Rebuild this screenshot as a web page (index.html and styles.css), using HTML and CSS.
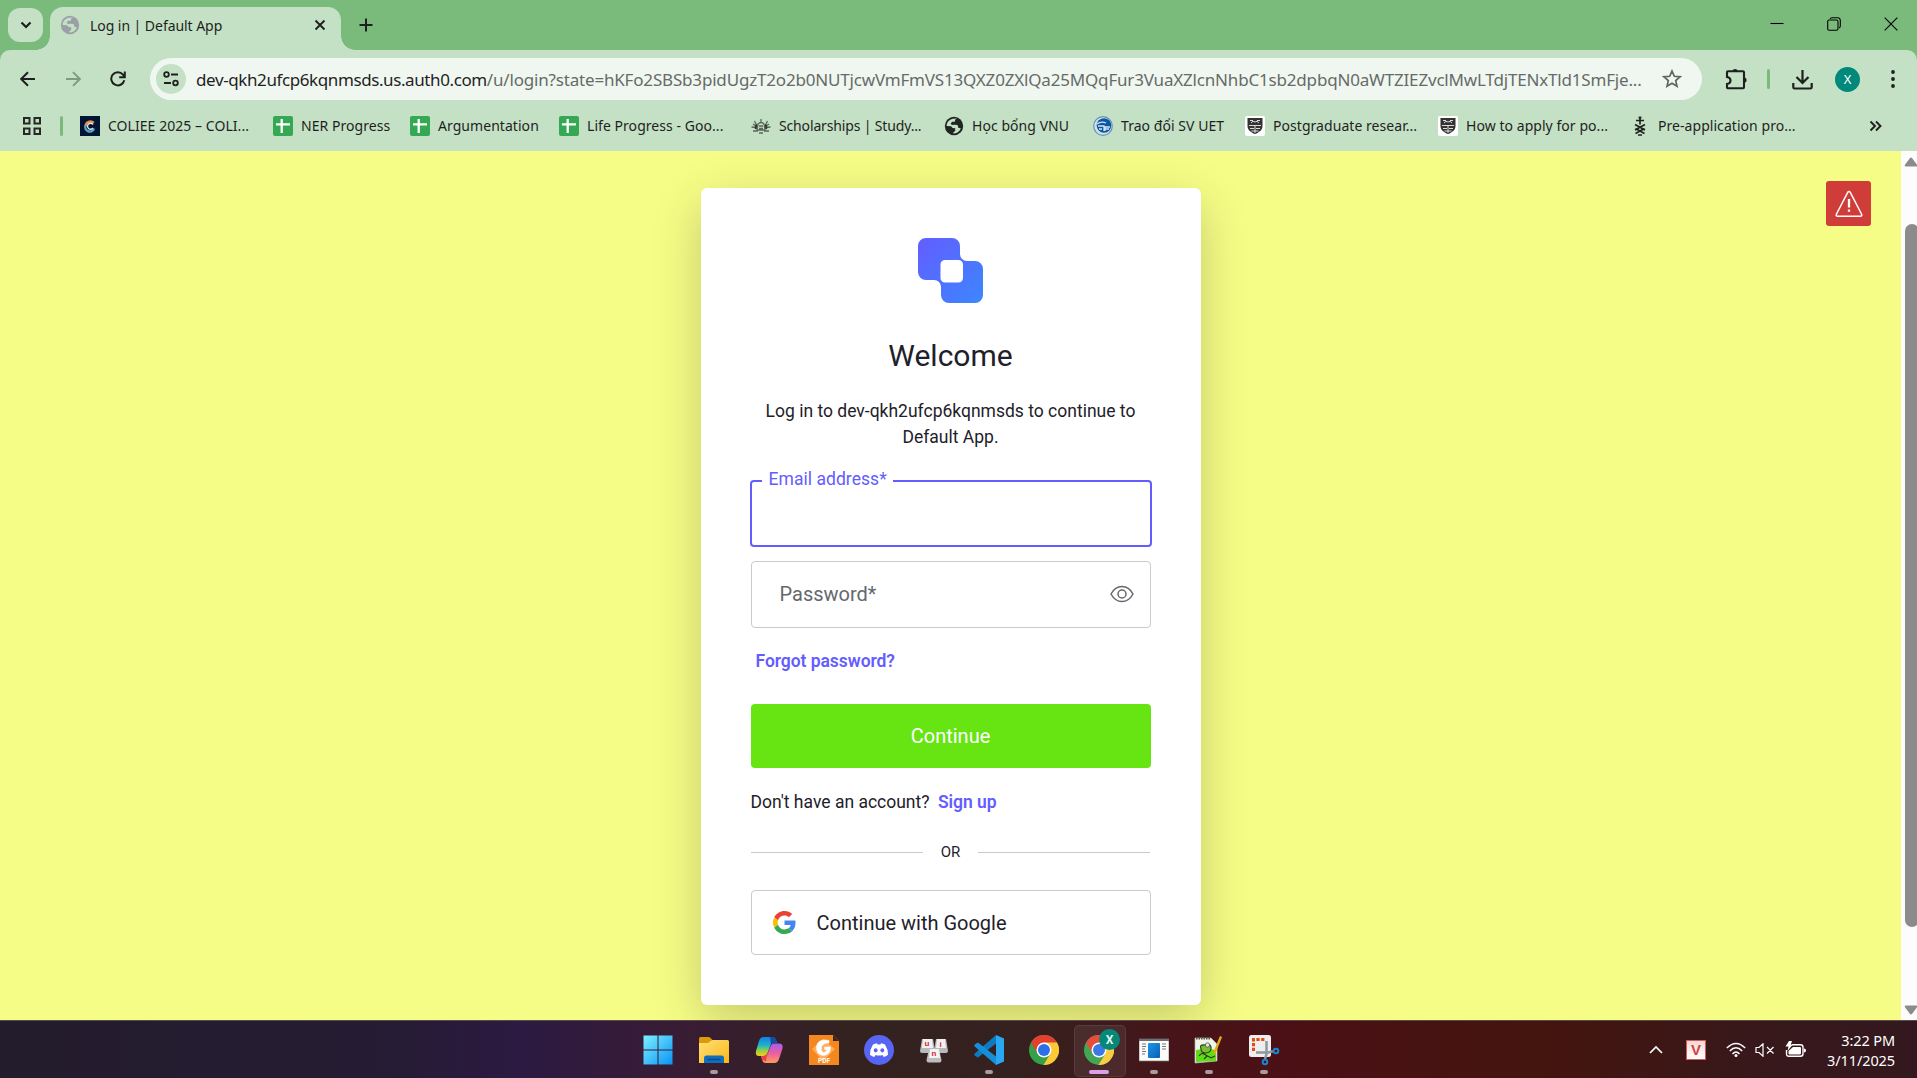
FILE: index.html
```html
<!DOCTYPE html>
<html lang="en">
<head>
<meta charset="utf-8">
<title>Log in | Default App</title>
<link rel="stylesheet" href="styles.css">
</head>
<body>
<svg class="defs" width="0" height="0" aria-hidden="true">
  <defs>
    <linearGradient id="logoGrad" x1="0" y1="0" x2="1" y2="1"><stop offset="0" stop-color="#635dff"/><stop offset="1" stop-color="#3c86ff"/></linearGradient>
    <linearGradient id="winGrad" x1="0" y1="0" x2="1" y2="1"><stop offset="0" stop-color="#7df0ff"/><stop offset="1" stop-color="#0a93f5"/></linearGradient>
    <linearGradient id="folderGrad" x1="0" y1="0" x2="1" y2="1"><stop offset="0" stop-color="#ffe07a"/><stop offset="1" stop-color="#fbb814"/></linearGradient>
    <linearGradient id="copA" x1="0" y1="0" x2="0" y2="1"><stop offset="0" stop-color="#0f7fe8"/><stop offset=".45" stop-color="#20b4c8"/><stop offset=".7" stop-color="#8fd04a"/><stop offset="1" stop-color="#fbc81b"/></linearGradient>
    <linearGradient id="copB" x1="0" y1="0" x2="0" y2="1"><stop offset="0" stop-color="#a85cf0"/><stop offset=".5" stop-color="#ea5f9f"/><stop offset="1" stop-color="#ff9a5c"/></linearGradient>
    <linearGradient id="blueGrad" x1="0" y1="0" x2="1" y2="1"><stop offset="0" stop-color="#1e96e8"/><stop offset="1" stop-color="#0860b4"/></linearGradient>
    <symbol id="globe" viewBox="0 0 20 20">
      <circle cx="10" cy="10" r="9.2" fill="currentColor"/>
      <path class="globe-land" d="M8.6 2.8c-3.4.8-6 3.700-6 7.200l4.500.2 1.500 1.800 2.600.2V15l-1.800 1.200-.2 1.400c3.400 0 6.500-2 7.700-5l-2.600-.9-.7-2.600-3.300-.4-2.600.3-1-1.700 1.700-1.600h2.400l.5-2.300 1.800-1z"/>
    </symbol>
    <symbol id="sheet" viewBox="0 0 20 20"><rect width="20" height="20" rx="2" fill="#34a853"/><path d="M8.700 3v14M3 8.300h14" stroke="#fff" stroke-width="2.300"/></symbol>
    <symbol id="crest" viewBox="0 0 20 20"><rect width="20" height="20" rx="2" fill="#fff"/><path d="M2.500 2h15v8c0 4-3.500 6.500-7.500 8-4-1.500-7.500-4-7.500-8z" fill="#333"/><path d="M4 9.500h12M5 12.500h4m2 0h4M6.500 15h7M10 10v7M5 4.500h3m4 0h3M6 7q2-3 4-1 2-2 4 1" stroke="#ddd" stroke-width="1" fill="none"/></symbol>
    <symbol id="chromeLogo" viewBox="0 0 30 30">
      <circle cx="15" cy="15" r="15" fill="#34a048"/>
      <path d="M2 7.500A15 15 0 0 1 28 7.500L15 9 8.500 18.700z" fill="#e3402f"/>
      <path d="M28 7.500A15 15 0 0 1 14.500 30l7-11.500L15 7.500z" fill="#fcc934"/>
      <circle cx="15" cy="15" r="7.500" fill="#fff"/><circle cx="15" cy="15" r="6" fill="#2d6fe8"/>
    </symbol>
  </defs>
</svg>

<header class="browser">
  <div class="tabstrip">
    <button class="tab-search" aria-label="Search tabs"><svg width="12" height="8" viewBox="0 0 12 8"><path d="M1.500 1.500 6 6l4.500-4.500" fill="none" stroke="#1f1f1f" stroke-width="2.200"/></svg></button>
    <div class="tab">
      <svg class="tab-icon" width="20" height="20"><use href="#globe"/></svg>
      <span class="tab-title">Log in | Default App</span>
      <svg class="tab-close" width="12" height="12" viewBox="0 0 12 12"><path d="M1.500 1.500l9 9m0-9-9 9" stroke="#1f1f1f" stroke-width="1.900"/></svg>
    </div>
    <svg class="new-tab" width="14" height="14" viewBox="0 0 14 14"><path d="M7 .5v13M.5 7h13" stroke="#1f1f1f" stroke-width="2"/></svg>
    <div class="window-controls">
      <svg width="14" height="14" viewBox="0 0 14 14"><path d="M.5 6.500h13" stroke="#000" stroke-width="1.100"/></svg>
      <svg width="14" height="14" viewBox="0 0 14 14" fill="none" stroke="#000" stroke-width="1.100"><rect x=".7" y="3" width="10.300" height="10.300" rx="1.500"/><path d="M3 1.900Q3.500.7 5 .7h5.500q2.800 0 2.800 2.800V9q0 1.500-1.200 2"/></svg>
      <svg width="14" height="14" viewBox="0 0 14 14"><path d="M.7.700l12.600 12.600m0-12.600L.7 13.300" stroke="#000" stroke-width="1.100"/></svg>
    </div>
  </div>

  <div class="toolbar">
    <div class="nav">
      <svg width="16" height="16" viewBox="0 0 16 16"><path d="M15 8H1.500M8 1.200 1.200 8 8 14.800" fill="none" stroke="#1f1f1f" stroke-width="2"/></svg>
      <svg width="16" height="16" viewBox="0 0 16 16"><path d="M1 8h13.500M8 1.200 14.800 8 8 14.800" fill="none" stroke="#7e9a80" stroke-width="1.900"/></svg>
      <svg width="16" height="16" viewBox="0 0 16 16"><path d="M14.300 9.300A6.600 6.600 0 1 1 13 3.600l1.500 2M14.800.5v5.700H9.200" fill="none" stroke="#1f1f1f" stroke-width="2"/></svg>
    </div>
    <div class="omnibox">
      <span class="site-info"><svg width="16" height="16" viewBox="0 0 16 16" fill="none" stroke="#1f1f1f" stroke-width="1.800"><circle cx="3.500" cy="3.500" r="2.300"/><path d="M8 3.500h7M1 12h7"/><circle cx="12.500" cy="12" r="2.300"/></svg></span>
      <span class="url"><b>dev-qkh2ufcp6kqnmsds.us.auth0.com</b>/u/login?state=hKFo2SBSb3pidUgzT2o2b0NUTjcwVmFmVS13QXZ0ZXlQa25MQqFur3VuaXZlcnNhbC1sb2dpbqN0aWTZIEZvclMwLTdjTENxTld1SmFje...</span>
      <svg class="star" width="20" height="20" viewBox="0 0 20 20"><path d="M10 2l2.300 5.300 5.700.5-4.300 3.800 1.300 5.700-5-3-5 3 1.300-5.700L2 7.800l5.700-.5z" fill="none" stroke="#5f6661" stroke-width="1.700"/></svg>
    </div>
    <div class="actions">
      <svg class="ext" width="22" height="22" viewBox="0 0 22 22"><path d="M2 4.300q0-1 1-1h15q1 0 1 1v15q0 1-1 1H3q-1 0-1-1V16c3-.5 3.500-2 3.500-3.500S5 9.500 2 9z" fill="none" stroke="#1f1f1f" stroke-width="2.100"/><path d="M7.500 3.500a2.600 2.600 0 0 1 5.200 0zM19 9.500a2.600 2.600 0 0 1 0 5.200z" fill="#1f1f1f"/></svg>
      <i class="divider"></i>
      <svg class="dl" width="21" height="21" viewBox="0 0 21 21"><path d="M10.500 1v13M4.500 8l6 6 6-6M1.300 14v4.200q0 1.300 1.300 1.300h15.800q1.300 0 1.300-1.300V14" fill="none" stroke="#1f1f1f" stroke-width="2.200"/></svg>
      <span class="avatar">X</span>
      <svg class="menu" width="4" height="18" viewBox="0 0 4 18" fill="#1f1f1f"><circle cx="2" cy="2" r="1.900"/><circle cx="2" cy="9" r="1.900"/><circle cx="2" cy="16" r="1.900"/></svg>
    </div>
  </div>

  <nav class="bookmarks">
    <svg class="apps" width="18" height="18" viewBox="0 0 18 18" fill="none" stroke="#252925" stroke-width="2"><path d="M1 1h5.500v5.500H1zM11.500 1H17v5.500h-5.500zM1 11.500h5.500V17H1zM11.500 11.500H17V17h-5.500z"/></svg>
    <i class="divider"></i>
    <a class="bm w193"><svg width="20" height="20" viewBox="0 0 20 20"><rect width="20" height="20" fill="#021433"/><path d="M13.800 6.800A5 5 0 0 0 5.500 10" fill="none" stroke="#e8905a" stroke-width="2.400"/><path d="M5.500 9.500a4.500 4.500 0 0 0 8.500 3" fill="none" stroke="#4ba6c4" stroke-width="2.400"/><path d="M13 8.500a3 3 0 1 0 0 3.500" fill="none" stroke="#f5e6d2" stroke-width="1.300"/></svg><span>COLIEE 2025 – COLI...</span></a>
    <a class="bm w137"><svg width="20" height="20"><use href="#sheet"/></svg><span>NER Progress</span></a>
    <a class="bm w149"><svg width="20" height="20"><use href="#sheet"/></svg><span>Argumentation</span></a>
    <a class="bm w192"><svg width="20" height="20"><use href="#sheet"/></svg><span>Life Progress - Goo...</span></a>
    <a class="bm w193 tight"><svg width="20" height="20" viewBox="0 0 20 20" fill="none" stroke="#5a665b" stroke-width="1.300"><path d="M10 3v3M7 8q3-3 6 0l1 6H6zM3.500 5l2 4M16.500 5l-2 4M.5 11l5 .5M19.500 11l-5 .5M2 15h5M18 15h-5M8 17h4M8 10h4M8 12.500h4M2 8l3 2M18 8l-3 2"/><path d="M6 9q-2 1-1 4M14 9q2 1 1 4" stroke="#2f3a30" stroke-width="2"/></svg><span>Scholarships | Study...</span></a>
    <a class="bm w149"><svg class="dark-globe" width="20" height="20"><use href="#globe"/></svg><span>Học bổng VNU</span></a>
    <a class="bm w152"><svg width="20" height="20" viewBox="0 0 20 20"><circle cx="10" cy="10" r="9.300" fill="#cfe3e6" stroke="#6594b5" stroke-width="1.200"/><circle cx="11" cy="9.500" r="7.300" fill="#0b57a4"/><path d="M4 8q4-3 9-1M5 10h6v5M12 15v-4h5M12 13h4M6 13h3" fill="none" stroke="#d5e5ef" stroke-width="1.300"/></svg><span>Trao đổi SV UET</span></a>
    <a class="bm w193"><svg width="20" height="20"><use href="#crest"/></svg><span>Postgraduate resear...</span></a>
    <a class="bm w192"><svg width="20" height="20"><use href="#crest"/></svg><span>How to apply for po...</span></a>
    <a class="bm"><svg class="thistle" width="20" height="20" viewBox="0 0 20 20" fill="none" stroke="#1f211f" stroke-width="1.700"><path d="M10 .5v8M6 4.500h8M5 8.500l10 5.500M15 8.500 5 14M5.500 12.500l9 5M14.500 12.500l-9 5M8 19h4M8.500 1.500h3"/></svg><span>Pre-application pro...</span></a>
    <svg class="more" width="13" height="12" viewBox="0 0 13 12"><path d="M1.500 1.500 6 6l-4.500 4.500M7 1.500 11.500 6 7 10.500" fill="none" stroke="#1f1f1f" stroke-width="1.900"/></svg>
  </nav>
</header>

<main class="page">
  <section class="viewport">
    <div class="card">
      <svg class="logo" width="65" height="65" viewBox="0 0 65 65"><path fill="url(#logoGrad)" fill-rule="evenodd" d="M8 0H34a8 8 0 0 1 8 8v8a7 7 0 0 0 7 7h8a8 8 0 0 1 8 8v26a8 8 0 0 1-8 8H31a8 8 0 0 1-8-8v-8a7 7 0 0 0-7-7H8a8 8 0 0 1-8-8V8a8 8 0 0 1 8-8zM27 22a4.500 4.500 0 0 0-4.500 4.500v13.500A4.500 4.500 0 0 0 27 44.500h13.500A4.500 4.500 0 0 0 45 40V26.500A4.500 4.500 0 0 0 40.500 22z"/></svg>
      <h1>Welcome</h1>
      <p class="intro">Log in to dev-qkh2ufcp6kqnmsds to continue to Default App.</p>
      <div class="field focused"><label>Email address*</label></div>
      <div class="field"><span class="placeholder">Password*</span>
        <svg width="24" height="18" viewBox="0 0 24 18" fill="none" stroke="#65676e" stroke-width="1.500"><path d="M1 9C3.800 3.800 7.400 1.500 12 1.500S20.200 3.800 23 9c-2.800 5.200-6.400 7.500-11 7.500S3.800 14.200 1 9z"/><circle cx="12" cy="9" r="4"/></svg>
      </div>
      <a class="link forgot">Forgot password?</a>
      <button class="primary">Continue</button>
      <p class="signup">Don't have an account? <a class="link">Sign up</a></p>
      <div class="or"><i></i><span>OR</span><i></i></div>
      <button class="google">
        <svg width="23" height="23" viewBox="0 0 48 48"><path fill="#ea4335" d="M24 9.500c3.540 0 6.710 1.220 9.210 3.600l6.850-6.850C35.900 2.380 30.470 0 24 0 14.620 0 6.510 5.380 2.560 13.220l7.980 6.190C12.430 13.720 17.740 9.500 24 9.500z"/><path fill="#4285f4" d="M46.980 24.550c0-1.570-.15-3.090-.38-4.550H24v9.020h12.940c-.58 2.960-2.260 5.480-4.780 7.180l7.730 6c4.510-4.180 7.090-10.360 7.090-17.650z"/><path fill="#fbbc05" d="M10.530 28.590A14.500 14.500 0 0 1 9.770 24c0-1.600.27-3.140.76-4.590l-7.980-6.190A23.900 23.900 0 0 0 0 24c0 3.880.92 7.540 2.560 10.780z"/><path fill="#34a853" d="M24 48c6.480 0 11.930-2.130 15.890-5.810l-7.730-6c-2.150 1.450-4.920 2.300-8.160 2.300-6.260 0-11.570-4.220-13.470-9.910l-7.980 6.190C6.510 42.620 14.620 48 24 48z"/></svg>
        <span>Continue with Google</span>
      </button>
    </div>
    <div class="alert"><svg width="28" height="28" viewBox="0 0 28 28" fill="none" stroke="#fff" stroke-width="1.500"><path d="M14 1.500q.8 0 1.300.9l11.300 21.800q.8 2-1.300 2H2.700q-2.100 0-1.300-2L12.700 2.400q.5-.9 1.300-.9z"/><path d="M14 9v8.500M14 19.500v2.300" stroke-width="2.300"/></svg></div>
  </section>
  <aside class="scrollbar">
    <svg width="14" height="10" viewBox="0 0 14 10"><path d="M7 .5q.7 0 1.200.7l5 6.800q.3 1.500-1.200 1.500H2Q.5 9.500.8 8l5-6.800Q6.300.5 7 .5z" fill="#8b8b8b"/></svg>
    <i class="thumb"></i>
    <svg width="14" height="10" viewBox="0 0 14 10"><path d="M7 9.500q.7 0 1.200-.7l5-6.800q.3-1.500-1.200-1.500H2Q.5.500.8 2l5 6.800q.5.700 1.200.7z" fill="#8b8b8b"/></svg>
  </aside>
</main>

<footer class="taskbar">
  <div class="dock">
    <span class="app"><svg width="30" height="30" viewBox="0 0 30 30"><path d="M.5.500H14.500V14.500H.5zM15.500.500h14v14h-14zM.5 15.500h14v14H.5zM15.500 15.500h14v14h-14z" fill="url(#winGrad)"/></svg></span>
    <span class="app running"><svg width="30" height="30" viewBox="0 0 30 30"><path d="M0 9V3.500q0-1.500 1.500-1.500h8q1 0 2 1l3 3V10z" fill="#dd9a07"/><path d="M0 8h8q1.500 0 3-1.500T14 5h14.500Q30 5 30 6.500V28H0z" fill="url(#folderGrad)"/><path d="M5 28v-5q0-2.500 2.500-2.500h15Q25 20.500 25 23v5z" fill="#0f6fbd"/><path d="M9 24.500h12" stroke="#0a4a88" stroke-width="1.300" stroke-linecap="round"/></svg></span>
    <span class="app"><svg width="30" height="30" viewBox="0 0 30 30"><path d="M9.500 2h9q2.500 0 3.500 3l1 3h-3q-3 0-4 3.500L13.500 18q-1.200 3-4 3H5q-4 0-3-5L5 6q1.300-4 4.500-4z" fill="url(#copA)"/><path d="M16 2h2.500q2.500 0 3.500 3l1 3h-3q-2 0-3 2z" fill="#1749a8"/><path d="M20.500 28h-9Q9 28 8 24.500L7 21h3q3 0 4-3.500l2.500-6Q17.700 8.500 20.500 8.500H25q4.500 0 3.500 5L25 24q-1.300 4-4.500 4z" fill="url(#copB)"/><path d="M8 24.500 7 21h3q2 0 3-2l-1 7.500z" fill="#e8443a"/></svg></span>
    <span class="app"><svg width="30" height="30" viewBox="0 0 30 30"><path d="M0 0h24l6 6v24H0z" fill="#f5871f"/><path d="M24 0v6h6z" fill="#3a2420"/><path d="M14 4 26 14 14 26 3 14z" fill="#ffad60"/><path d="M20 5.500q-11-2.500-12.500 6Q7 20 14.500 20.500q7-.5 7-8.500h-6v2.500h2.500q-1 3-3.500 3-3-1-2-6 2-4 7.500-3.500z" fill="#fff" stroke="#fff" stroke-width=".6"/><text class="pdf" x="15" y="27.500" text-anchor="middle">PDF</text></svg></span>
    <span class="app"><svg width="30" height="30" viewBox="0 0 30 30"><circle cx="15" cy="15" r="15" fill="#5865f2"/><path d="M9 9.500q2-1.100 4-1.300l.6 1.200h2.800l.6-1.200q2 .2 4 1.300 3.200 5 3 10.300-2.200 1.700-4.300 2.200l-1.200-2q-3.500 1-7 0l-1.200 2Q8.200 21.500 6 19.800 5.800 14.500 9 9.500z" fill="#fff"/><ellipse cx="11.700" cy="15.300" rx="1.900" ry="2.100" fill="#5865f2"/><ellipse cx="18.300" cy="15.300" rx="1.900" ry="2.100" fill="#5865f2"/></svg></span>
    <span class="app"><svg width="30" height="30" viewBox="0 0 30 30"><path d="M3 4h11l2 12q0 2-2 2H3q-2 0-2-2zM17 4h10l2 12q0 2-2 2H17q-2 0-2-2z" fill="#b9b9bb"/><path d="M4 4h9l1 9H3zM18 4h8l1 9H17z" fill="#f0eff1"/><path d="M10 14h10l2.500 11q0 2.500-2 2.500H9.500q-2 0-2-2.500z" fill="#bdbdc0"/><path d="M11 14h9l1 9H10z" fill="#f3f2f4"/><g class="keys"><text x="5.500" y="11">u</text><text x="20.500" y="11.500">i</text><text x="12.500" y="21">n</text></g></svg></span>
    <span class="app running"><svg width="30" height="30" viewBox="0 0 30 30"><path d="M22 0 30 3.500v23L22 30z" fill="#2aa7f2"/><path d="M22 0v8.500L4 22.500 1 20.800q-1.300-1.300 0-2.500z" fill="#0d7ac4"/><path d="M22 30v-8.500L4 7.500 1 9.200Q-.3 10.500 1 11.700z" fill="#168fdb"/></svg></span>
    <span class="app"><svg width="30" height="30"><use href="#chromeLogo"/></svg></span>
    <span class="app running active"><svg width="30" height="30"><use href="#chromeLogo"/></svg><b class="badge">X</b></span>
    <span class="app running"><svg width="30" height="30" viewBox="0 0 30 30"><path d="M0 4h30v22H0z" fill="#fbfbfb" stroke="#777" stroke-width=".7"/><path d="M0 4h30v2H0z" fill="#6d7072"/><rect x="9" y="8" width="12" height="15" rx="1" fill="url(#blueGrad)"/><path d="M3 9h4M3 11.500h4M3 14h3M3 16.500h4M3 19h3M23 9h4M23 11.500h4M23 14h4" stroke="#777" stroke-width="1.100"/></svg></span>
    <span class="app running"><svg width="30" height="30" viewBox="0 0 30 30"><path d="M1 3h16l6 6v17L1 28z" fill="#eef5e6" stroke="#aab5a3" stroke-width=".7"/><path d="M2 15q10-2 20 0v11L2 27z" fill="#5fdc18"/><path d="M2 3.500h15" stroke="#555" stroke-dasharray="1.500 1" stroke-width="2"/><path d="M7 14q-2-5 4-4 5-2 6 2 1 5-5 6-5 0-5-4zM5 21q3-4 5-2l7 4 4-2M10 24l3-3" fill="#79bd32" stroke="#263d17" stroke-width="1.100"/><circle cx="13.500" cy="10" r="2.200" fill="#dfe6da" stroke="#445" stroke-width=".7"/><path d="M20 19 27 1.500" stroke="#e7a91a" stroke-width="2.300"/></svg></span>
    <span class="app running"><svg width="30" height="30" viewBox="0 0 30 30" overflow="visible"><rect width="22" height="22" rx="2.500" fill="#eee"/><path d="M4.500 16V4.500H16" fill="none" stroke="#e04a14" stroke-width="3" stroke-dasharray="3.200 1.600"/><path d="M17.500 6v13l-1.500 5M7 17.500h12l5-1.300" fill="none" stroke="#90979d" stroke-width="2.500"/><circle cx="27" cy="16" r="2.300" fill="none" stroke="#1686d0" stroke-width="2"/><circle cx="16" cy="27" r="2.300" fill="none" stroke="#1686d0" stroke-width="2"/></svg></span>
  </div>
  <div class="tray">
    <svg width="14" height="9" viewBox="0 0 14 9"><path d="M1 8l6-6 6 6" fill="none" stroke="#fff" stroke-width="1.700"/></svg>
    <span class="vkey">V</span>
    <svg class="wifi" width="20" height="16" viewBox="0 0 20 16" fill="none" stroke="#fff" stroke-width="1.500"><path d="M.8 6Q10-3 19.200 6M3.800 9Q10 2.500 16.200 9M6.500 12Q10 8 13.500 12"/><circle cx="10" cy="13.500" r="1.500" fill="#fff" stroke="none"/></svg>
    <svg class="mute" width="20" height="14" viewBox="0 0 20 14" fill="none" stroke="#fff" stroke-width="1.200"><path d="M1 4.500h3l4-3.700v12.400L4 9.500H1zM12 4l6.500 6.500m0-6.500L12 10.500"/></svg>
    <svg class="battery" width="21" height="17" viewBox="0 0 21 17"><path d="M7 3.700h8.500q2.500 0 2.500 2.500v6.600q0 2.500-2.500 2.500H4q-2.500 0-2.500-2.500V9" fill="none" stroke="#fff" stroke-width="1.400"/><path d="M8 6h7q1 0 1 1v5.500q0 1-1 1H4.500q-1 0-1-1V10zM19 7.500q2 0 2 2t-2 2zM4 0h3L5.800 3.500h2L2.500 10l1-4.500H.5z" fill="#fff"/></svg>
    <div class="clock"><span>3:22 PM</span><span>3/11/2025</span></div>
  </div>
</footer>
</body>
</html>
```
FILE: styles.css
```css
* { box-sizing: border-box; }
body {
  margin: 0;
  width: 1917px;
  height: 1078px;
  overflow: hidden;
  display: flex;
  flex-direction: column;
  font-family: Roboto, "Liberation Sans", sans-serif;
  color: #1e212a;
}
.defs { position: absolute; }
svg { display: block; flex: none; }
button { font: inherit; border: 0; padding: 0; }

/* browser chrome */
.browser {
  flex: none;
  height: 151px;
  background: #7abb7b;
  font-family: "Noto Sans", "Open Sans", sans-serif;
  color: #1f1f1f;
}
.tabstrip { height: 50px; display: flex; align-items: flex-start; padding-left: 8px; }
.tab-search {
  width: 35px; height: 34px; margin-top: 8px;
  border-radius: 12px; background: #c4e1c5;
  display: grid; place-items: center;
}
.tab {
  position: relative;
  width: 291px; height: 43px; margin: 7px 0 0 7px; padding: 0 15px 7px 10px;
  display: flex; align-items: center;
  background: #c4e1c5; border-radius: 13px 13px 0 0;
}
.tab::before, .tab::after {
  content: ""; position: absolute; bottom: 0; width: 14px; height: 14px;
}
.tab::before { right: 100%; background: radial-gradient(circle at 0 0, transparent 13.500px, #c4e1c5 14px); }
.tab::after { left: 100%; background: radial-gradient(circle at 100% 0, transparent 13.500px, #c4e1c5 14px); }
.tab-icon { color: #9aa0a6; }
.globe-land { fill: #c4e1c5; }
.dark-globe { color: #202422; }
.tab-title { margin-left: 10px; font-size: 14px; letter-spacing: -.05px; }
.tab-close { margin-left: auto; }
.new-tab { margin: 18px 0 0 18px; }
.window-controls { margin: 17px 0 0 auto; padding-right: 19px; display: flex; gap: 43px; }

.toolbar {
  height: 58px; display: flex; align-items: center;
  background: #c4e1c5; border-radius: 10px 10px 0 0;
}
.nav { display: flex; gap: 29px; margin-left: 20px; width: 130px; }
.omnibox {
  width: 1552px; height: 42px; border-radius: 21px; padding: 0 20px 0 6px;
  background: #f0f7f1; display: flex; align-items: center;
}
.site-info { width: 30px; height: 30px; border-radius: 50%; background: #c4e1c5; display: grid; place-items: center; }
.url { margin-left: 10px; font-size: 17px; color: #666b67; white-space: nowrap; letter-spacing: -.18px; }
.url b { font-weight: 400; color: #1f1f1f; letter-spacing: -.4px; }
.star { margin-left: auto; }
.actions { flex: 1; display: flex; align-items: center; }
.ext { margin-left: 23px; }
.divider { width: 3px; height: 20px; border-radius: 2px; background: #7abb7b; }
.actions .divider { margin-left: 20px; }
.dl { margin-left: 22px; }
.avatar {
  width: 25px; height: 25px; margin-left: 22px; border-radius: 50%;
  background: #00897b; color: #fff; font-size: 13px; display: grid; place-items: center;
}
.menu { margin-left: 31px; }

.bookmarks { height: 43px; padding: 0 35px 7px 23px; display: flex; align-items: center; background: #c4e1c5; }
.bookmarks .divider { margin: 0 17px 0 19px; }
.bm { display: flex; align-items: center; gap: 8px; font-size: 14px; letter-spacing: .05px; white-space: nowrap; }
.bm span { padding-bottom: 2px; }
.tight { letter-spacing: -.15px; }
.w137 { width: 137px; }
.w149 { width: 149px; }
.w152 { width: 152px; }
.w192 { width: 192px; }
.w193 { width: 193px; }
.more { margin-left: auto; }

/* login page */
.page { flex: 1; display: flex; min-height: 0; }
.viewport {
  position: relative; width: 1901px; overflow: hidden; background: #f6fd86;
  display: flex; justify-content: center; align-items: flex-start; padding-top: 37px;
}
.card {
  width: 500px; height: 817px; padding: 50px; border-radius: 6px; background: #fff;
  box-shadow: 0 15px 50px rgba(0, 0, 0, .2);
  display: flex; flex-direction: column; font-size: 17.500px;
}
.logo { align-self: center; }
h1 { margin: 32px 0 0; font-size: 30px; line-height: 42px; font-weight: 400; text-align: center; }
.intro { margin: 21px 0 0; line-height: 26px; text-align: center; }
.field {
  position: relative; height: 67px; margin-top: 14px; padding: 0 16px 0 28px;
  border: 1px solid #c9cace; border-radius: 4px;
  display: flex; align-items: center; justify-content: space-between;
}
.field.focused { margin: 30px -1px 0; border: 2px solid #635dff; height: 67px; }
.field label {
  position: absolute; left: 10px; top: -15px; padding: 0 6px 0 7px; letter-spacing: .05px;
  background: #fff; color: #635dff; font-size: 17.500px; line-height: 24px;
}
.placeholder { font-size: 20px; color: #65676e; }
.link { color: #635dff; font-weight: 600; letter-spacing: -.05px; }
.forgot { margin: 20px 0 0 5px; line-height: 26px; }
.primary { height: 65px; margin-top: 30px; border-radius: 4px; background: #67e512; color: #fff; font-size: 20px; }
.signup { margin: 21px 0 0; line-height: 26px; }
.signup .link { margin-left: 4px; }
.or { display: flex; align-items: center; justify-content: space-between; height: 26px; margin-top: 24px; font-size: 15px; }
.or i { width: 172px; height: 1px; background: #c9cace; }
.google {
  height: 65px; margin-top: 25px; padding-left: 21px; border: 1px solid #c9cace; border-radius: 4px;
  background: #fff; color: #1e212a; font-size: 20px; display: flex; align-items: center; gap: 21px;
}
.alert {
  position: absolute; right: 30px; top: 30px; width: 45px; height: 45px; border-radius: 3px;
  background: #d03c38; display: grid; place-items: center;
}
.scrollbar {
  width: 16px; padding: 6px 0 5px 3px; overflow: hidden; background: #fcfcfc;
  display: flex; flex-direction: column;
}
.thumb { width: 14px; height: 703px; margin: 57px 0 auto 1px; border-radius: 7px; background: #8b8b8b; }

/* taskbar */
.taskbar {
  flex: none; height: 58px; border-top: 1px solid #5a4a4a;
  background: linear-gradient(90deg, #231c2c 0, #251c33 380px, #2c1a42 520px, #381c34 680px, #33221f 850px, #35211f 1020px, #471419 1180px, #4b1015 1290px, #44150f 1550px, #38181a 1750px, #33181f 1917px);
  display: flex; align-items: center; justify-content: space-between;
  padding: 0 22px 0 630px;
}
.dock { display: flex; height: 100%; }
.app { position: relative; width: 55px; padding: 14px 0 0 14px; }
.app:first-child { padding-left: 13px; }
.running::after {
  content: ""; position: absolute; left: 25px; bottom: 4px; width: 8px; height: 4px;
  border-radius: 2px; background: #a99a9d;
}
.active::before {
  content: ""; position: absolute; left: 4px; top: 4px; width: 50px; height: 50px;
  border-radius: 5px; background: rgba(255, 255, 255, .07); border: 1px solid rgba(255, 255, 255, .08);
}
.active::after { left: 19px; width: 20px; background: #dda0e6; }
.badge {
  position: absolute; left: 29px; top: 8px; width: 21px; height: 21px; border-radius: 50%;
  background: #078778; color: #dff4ef; font-size: 12px; display: grid; place-items: center;
}
.pdf { font: 700 6.500px Roboto, sans-serif; fill: #fff; }
.keys { font: 700 8px "Liberation Sans", sans-serif; fill: #d9232c; }
.tray { display: flex; align-items: center; color: #fff; font-family: "Noto Sans", sans-serif; }
.vkey {
  width: 20px; height: 20px; margin: 0 20px 0 23px; border: 1px solid #d95952;
  background: linear-gradient(#f6d9d8, #fff); color: #d0433e; font: 700 15px/18px "Liberation Sans", sans-serif; text-align: center;
}
.mute { margin-left: 9px; }
.battery { margin-left: 10px; }
.clock { width: 89px; display: flex; flex-direction: column; align-items: flex-end; font-size: 14.500px; line-height: 20px; letter-spacing: -.1px; white-space: nowrap; }
```
